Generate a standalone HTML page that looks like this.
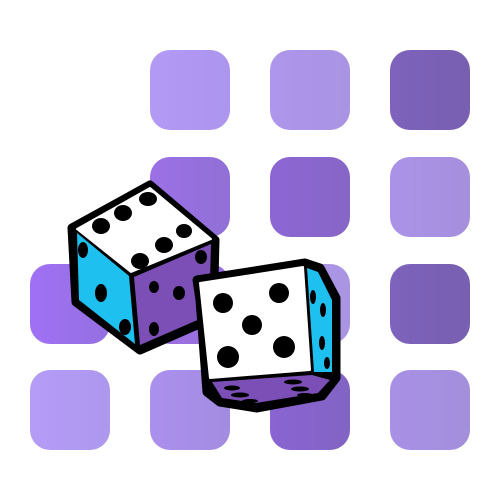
<!DOCTYPE html>
<html><head><style>
html,body{margin:0;padding:0;background:#fff;width:500px;height:500px;overflow:hidden}
.s{position:absolute;width:80px;height:80px;border-radius:20px}
</style></head><body>
<div class="s" style="left:150px;top:50px;background:linear-gradient(90deg,#b39af5,#ac95ee)"></div>
<div class="s" style="left:270px;top:50px;background:linear-gradient(90deg,#ae96ec,#a993e3)"></div>
<div class="s" style="left:390px;top:50px;background:linear-gradient(90deg,#7e62bc,#785fb0)"></div>
<div class="s" style="left:150px;top:157px;background:linear-gradient(90deg,#9c70e6,#9070d6)"></div>
<div class="s" style="left:270px;top:157px;background:linear-gradient(90deg,#8d66d4,#8666c6)"></div>
<div class="s" style="left:390px;top:157px;background:linear-gradient(90deg,#ab92e8,#a590dc)"></div>
<div class="s" style="left:30px;top:264px;background:linear-gradient(90deg,#a070f5,#9470e0)"></div>
<div class="s" style="left:150px;top:264px;background:#9a70e0"></div>
<div class="s" style="left:270px;top:264px;background:linear-gradient(90deg,#b097f0,#a995e2)"></div>
<div class="s" style="left:390px;top:264px;background:linear-gradient(90deg,#7e62bc,#785fb0)"></div>
<div class="s" style="left:30px;top:370px;background:linear-gradient(90deg,#b59cf7,#ad98ee)"></div>
<div class="s" style="left:150px;top:370px;background:linear-gradient(90deg,#ab90ee,#a28ce0)"></div>
<div class="s" style="left:270px;top:370px;background:linear-gradient(90deg,#8a64d2,#8264c4)"></div>
<div class="s" style="left:390px;top:370px;background:linear-gradient(90deg,#a890e6,#a38fdc)"></div>
<svg width="500" height="500" style="position:absolute;left:0;top:0" stroke-linejoin="round">
<!-- left die -->
<path d="M150,185 L215,240 L213,318 L140,350 L76,302 L72,228 Z" fill="#000" stroke="#000" stroke-width="9"/>
<path d="M150,188 L211,239 L131,272 L77,229 Z" fill="#fff" stroke="#fff" stroke-width="2" stroke-linejoin="round"/>
<path d="M77,233 L129,276 L135,344 L79,300 Z" fill="#1ec0f0"/>
<path d="M134,277 L211,244 L209,315 L140,345 Z" fill="#7b4fb6"/>
<g fill="#000">
<ellipse cx="101" cy="226" rx="9" ry="8"/><ellipse cx="123" cy="213" rx="9" ry="8"/><ellipse cx="148" cy="199" rx="9" ry="7"/>
<ellipse cx="184" cy="231" rx="8" ry="7"/><ellipse cx="164" cy="245" rx="9" ry="8"/><ellipse cx="140" cy="261" rx="9" ry="8"/>
<ellipse cx="83" cy="250" rx="5" ry="8"/><ellipse cx="101" cy="293" rx="6" ry="9"/><ellipse cx="125" cy="327" rx="6" ry="8"/>
<ellipse cx="201" cy="257" rx="6" ry="7"/><ellipse cx="179" cy="293" rx="6" ry="7"/><ellipse cx="154" cy="287" rx="5" ry="6"/><ellipse cx="154" cy="329" rx="5" ry="7"/>
</g>
<!-- right die -->
<path d="M197,280 L305,263 L320,268 L336,298 L336,378 L322,396 L257,408 L220,402 L207,392 L200,300 Z" fill="#000" stroke="#000" stroke-width="9"/>
<path d="M200,283 L303,267 L310,370 L210,378 Z" fill="#fff" stroke="#fff" stroke-width="2"/>
<path d="M307,268 L318,272 L332,300 L332,372 L314,372 Z" fill="#1ec0f0"/>
<path d="M212,382 L312,375 L330,380 L318,393 L256,403 L222,398 Z" fill="#7b4fb6"/>
<g fill="#000">
<circle cx="223" cy="303" r="10"/><circle cx="279" cy="293" r="10"/><circle cx="252" cy="325" r="10"/>
<circle cx="228" cy="357" r="11"/><circle cx="284" cy="347" r="11"/>
<ellipse cx="313" cy="297" rx="3" ry="7"/><ellipse cx="323" cy="310" rx="3" ry="7"/><ellipse cx="322" cy="343" rx="3" ry="7"/><ellipse cx="327" cy="363" rx="3" ry="6"/>
<ellipse cx="232" cy="388" rx="8" ry="2.5"/><ellipse cx="240" cy="395" rx="9" ry="2.5"/><ellipse cx="250" cy="401" rx="8" ry="2"/>
<ellipse cx="293" cy="382" rx="9" ry="2.5"/><ellipse cx="300" cy="389" rx="9" ry="2.5"/><ellipse cx="305" cy="395" rx="8" ry="2"/>
</g>
</svg>
</body></html>
